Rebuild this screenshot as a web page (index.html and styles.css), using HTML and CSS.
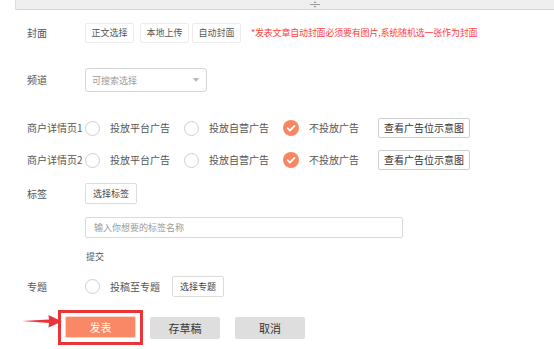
FILE: index.html
```html
<!DOCTYPE html>
<html lang="zh-CN">
<head>
    <meta charset="UTF-8">
    <title>发表文章</title>
    <link rel="stylesheet" href="styles.css">
</head>
<body>

<div class="toolbar">
    <svg class="grip" width="12" height="9" viewBox="0 0 12 9">
        <path d="M1 4.5h10" stroke="#9a9a9a" stroke-width="1"/>
        <path d="M4.5 3 6 1.2 7.5 3z M4.5 6 6 7.8 7.5 6z" fill="#9a9a9a"/>
    </svg>
</div>

<div class="form">
    <div class="row row-cover">
        <span class="label">封面</span>
        <button class="btn btn-cover">正文选择</button>
        <button class="btn btn-cover btn-mid">本地上传</button>
        <button class="btn btn-cover">自动封面</button>
        <span class="tip">*发表文章自动封面必须要有图片,系统随机选一张作为封面</span>
    </div>

    <div class="row row-channel">
        <span class="label">频道</span>
        <div class="select">
            <span>可搜索选择</span>
            <i class="caret"></i>
        </div>
    </div>

    <div class="row row-ad">
        <span class="label">商户详情页1</span>
        <span class="radio"></span><span class="opt">投放平台广告</span>
        <span class="radio"></span><span class="opt">投放自营广告</span>
        <span class="radio checked"><svg width="16" height="16" viewBox="0 0 16 16"><path d="M4.6 8.2 7 10.5 11.4 6" fill="none" stroke="#fff" stroke-width="1.8" stroke-linecap="round" stroke-linejoin="round"/></svg></span><span class="opt">不投放广告</span>
        <button class="btn btn-view">查看广告位示意图</button>
    </div>

    <div class="row row-ad row-ad2">
        <span class="label">商户详情页2</span>
        <span class="radio"></span><span class="opt">投放平台广告</span>
        <span class="radio"></span><span class="opt">投放自营广告</span>
        <span class="radio checked"><svg width="16" height="16" viewBox="0 0 16 16"><path d="M4.6 8.2 7 10.5 11.4 6" fill="none" stroke="#fff" stroke-width="1.8" stroke-linecap="round" stroke-linejoin="round"/></svg></span><span class="opt">不投放广告</span>
        <button class="btn btn-view">查看广告位示意图</button>
    </div>

    <div class="row row-tags">
        <span class="label">标签</span>
        <button class="btn btn-pick">选择标签</button>
    </div>

    <div class="tag-input">输入你想要的标签名称</div>

    <div class="submit-link">提交</div>

    <div class="row row-topic">
        <span class="label">专题</span>
        <span class="radio"></span><span class="opt">投稿至专题</span>
        <button class="btn btn-pick">选择专题</button>
    </div>

    <div class="actions">
        <div class="publish-box">
            <button class="btn-publish">发表</button>
        </div>
        <button class="btn-gray btn-draft">存草稿</button>
        <button class="btn-gray btn-cancel">取消</button>
    </div>
</div>

<!-- 标注箭头 -->
<svg class="arrow" width="42" height="16" viewBox="0 0 42 16">
    <path d="M0 8 L27 6.6 L26.5 2 L40 8.6 L26.5 14.6 L27 10 Z" fill="#e8353a"/>
</svg>

</body>
</html>
```

FILE: styles.css
```css
body {
    margin: 0;
    font-family: "Noto Sans CJK SC", "Noto Sans", sans-serif;
    font-size: 10px;
    color: #555;
    background: #fff;
}
.toolbar {
    margin-left: 15px;
    height: 9px;
    background: #efefef;
    border-left: 1px solid #dedede;
    border-bottom: 1px solid #d6d6d6;
}
.grip {
    display: block;
    margin-left: 293px;
}
.form {
    padding-left: 27px;
}
.row {
    display: flex;
    align-items: center;
}
.label {
    width: 58px;
    flex: none;
    line-height: 14px;
    white-space: nowrap;
}
.btn {
    font-family: inherit;
    font-size: 9px;
    color: #555;
    background: #fff;
    border: 1px solid #e8e8e8;
    border-radius: 2px;
    height: 20px;
    padding: 0 6px;
    line-height: 18px;
    box-sizing: border-box;
    cursor: pointer;
}
.row-cover {
    margin-top: 13px;
    height: 20px;
}
.btn-cover {
    width: 49px;
    padding: 0;
    border-color: #ececec;
}
.btn-mid {
    margin: 0 3px 0 6px;
}
.tip {
    margin-left: 10px;
    font-size: 9px;
    color: #ff3d3d;
    line-height: 12px;
    letter-spacing: -0.2px;
}
.row-channel {
    margin-top: 25px;
    height: 24px;
}
.select {
    width: 122px;
    height: 24px;
    box-sizing: border-box;
    border: 1px solid #d4d4d4;
    border-radius: 3px;
    display: flex;
    align-items: center;
    justify-content: space-between;
    padding: 0 7px 0 6px;
    font-size: 9px;
    color: #9a9a9a;
}
.caret {
    width: 0;
    height: 0;
    border-left: 3.5px solid transparent;
    border-right: 3.5px solid transparent;
    border-top: 4px solid #b8b8b8;
}
.row-ad {
    margin-top: 26px;
    height: 20px;
}
.row-ad2 {
    margin-top: 12px;
}
.radio {
    width: 15px;
    height: 15px;
    flex: none;
    box-sizing: border-box;
    border: 1px solid #cfcfcf;
    border-radius: 50%;
    margin-right: 10px;
}
.radio.checked {
    width: 16px;
    height: 16px;
    border: 0;
    background: #fa8562;
}
.radio.checked svg {
    display: block;
}
.opt {
    margin-right: 14px;
    line-height: 14px;
    white-space: nowrap;
}
.btn-view {
    margin-left: 5px;
    font-size: 10px;
    color: #333;
    border-color: #cfcfcf;
    padding: 0 5px;
}
.row-tags {
    margin-top: 13px;
    height: 21px;
}
.btn-pick {
    height: 21px;
    padding: 0 7px;
    border-color: #dcdcdc;
    color: #444;
}
.tag-input {
    margin: 13px 0 0 58px;
    width: 318px;
    height: 21px;
    box-sizing: border-box;
    border: 1px solid #dadada;
    border-radius: 2px;
    padding-left: 8px;
    font-size: 9px;
    line-height: 19px;
    color: #9a9a9a;
}
.submit-link {
    margin: 13px 0 0 59px;
    font-size: 9px;
    line-height: 12px;
    color: #555;
}
.row-topic {
    margin-top: 13px;
    height: 21px;
}
.row-topic .opt {
    margin-right: 12px;
}
.actions {
    margin: 13px 0 0 31px;
    display: flex;
    align-items: center;
}
.publish-box {
    border: 3px solid #ea3538;
    padding: 3px 4px 4px;
}
.btn-publish {
    display: block;
    width: 71px;
    height: 22px;
    font-family: inherit;
    font-size: 11px;
    color: #fff;
    background: #f98866;
    border: 1px solid #fcd3c5;
    border-radius: 2px;
    cursor: pointer;
}
.btn-gray {
    width: 70px;
    height: 22px;
    font-family: inherit;
    font-size: 11px;
    color: #333;
    background: #dedede;
    border: 0;
    border-radius: 2px;
    cursor: pointer;
}
.btn-draft {
    margin-left: 7px;
}
.btn-cancel {
    margin-left: 15px;
}
.arrow {
    position: absolute;
    left: 22px;
    top: 313px;
}
```
